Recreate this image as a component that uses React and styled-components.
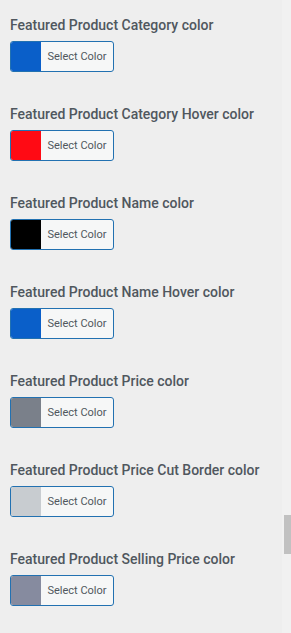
import React from "react";
import styled, { createGlobalStyle } from "styled-components";

const Global = createGlobalStyle`
  html, body { margin: 0; padding: 0; background: #eeeeee; overflow: hidden; }
  body { font-family: Roboto, "Noto Sans", sans-serif; }
`;

const Page = styled.div`
  display: flex;
  width: 291px;
  height: 633px;
  background: #eeeeee;
`;

const Content = styled.div`
  flex: 1;
  display: flex;
  flex-direction: column;
  gap: 34px;
  padding: 17px 0 0 10px;
`;

const Field = styled.div`
  display: flex;
  flex-direction: column;
  gap: 8px;
`;

const Label = styled.div`
  font-size: 14px;
  font-weight: 500;
  color: #50575e;
  line-height: 16px;
  white-space: nowrap;
`;

const ColorButton = styled.button`
  display: flex;
  align-items: stretch;
  width: 104px;
  height: 31px;
  padding: 0;
  border: 1px solid #2271b1;
  border-radius: 3px;
  background: #f6f7f7;
  overflow: hidden;
  cursor: pointer;
`;

const Swatch = styled.span`
  width: 30px;
  background: ${(p) => p.$color};
`;

const ButtonText = styled.span`
  flex: 1;
  display: flex;
  align-items: center;
  justify-content: center;
  font-family: Roboto, sans-serif;
  font-size: 11px;
  color: #50575e;
`;

const Rail = styled.div`
  position: relative;
  width: 9px;
  background: #f1f1f1;
`;

const Thumb = styled.div`
  position: absolute;
  left: 2px;
  right: 0;
  top: 515px;
  height: 39px;
  background: #c1c1c1;
`;

const fields = [
  ["Featured Product Category color", "#0a5fc9"],
  ["Featured Product Category Hover color", "#ff0a14"],
  ["Featured Product Name color", "#000000"],
  ["Featured Product Name Hover color", "#0a5fc9"],
  ["Featured Product Price color", "#7a808a"],
  ["Featured Product Price Cut Border color", "#c8ccd0"],
  ["Featured Product Selling Price color", "#868b9f"],
];

export default function App() {
  return (
    <>
      <Global />
      <Page>
        <Content>
          {fields.map(([label, color]) => (
            <Field key={label}>
              <Label>{label}</Label>
              <ColorButton type="button">
                <Swatch $color={color} />
                <ButtonText>Select Color</ButtonText>
              </ColorButton>
            </Field>
          ))}
        </Content>
        <Rail>
          <Thumb />
        </Rail>
      </Page>
    </>
  );
}
